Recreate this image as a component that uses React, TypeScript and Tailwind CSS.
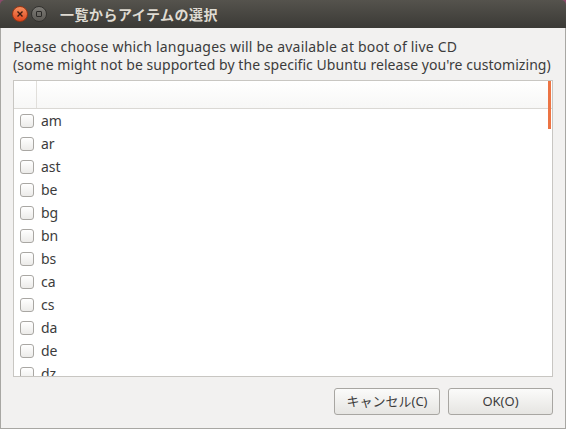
import React from 'react';

const langs = ['am', 'ar', 'ast', 'be', 'bg', 'bn', 'bs', 'ca', 'cs', 'da', 'de', 'dz'];

const font = { fontFamily: '"Noto Sans", "Noto Sans CJK JP", sans-serif' };

export default function App() {
  return (
    <div className="w-[566px] h-[429px] bg-[#8a4a6a] text-[#3c3c3c]" style={font}>
      <div className="flex flex-col h-full rounded-t-[5px] overflow-hidden">
        {/* title bar */}
        <div className="h-[28px] shrink-0 flex items-center bg-gradient-to-b from-[#55534d] to-[#3b3a36] px-[12px]">
          <div className="w-[16px] h-[16px] rounded-full bg-gradient-to-b from-[#f58e5d] to-[#e0461c] border border-[#9c3514] flex items-center justify-center">
            <svg width="8" height="8" viewBox="0 0 8 8">
              <path d="M1.5 1.5 L6.5 6.5 M6.5 1.5 L1.5 6.5" stroke="#3a1a10" strokeWidth="1.4" />
            </svg>
          </div>
          <div className="ml-[3px] w-[16px] h-[16px] rounded-full bg-gradient-to-b from-[#7d7b76] to-[#5c5a55] border border-[#33322f] flex items-center justify-center">
            <div className="w-[6px] h-[6px] border border-[#2a2927] rounded-[1px]" />
          </div>
          <div className="ml-[13px] text-[14px] font-bold text-[#dfdbd2] tracking-[0.5px]">一覧からアイテムの選択</div>
        </div>

        {/* body */}
        <div className="flex-1 flex flex-col bg-[#f2f1f0] border-x border-b border-[#a8a7a3] px-[12px] pt-[10px] pb-[13px]">
          <div className="text-[14px] leading-[18px]">
            <div className="tracking-[0.2px]">Please choose which languages will be available at boot of live CD</div>
            <div className="whitespace-nowrap tracking-[0.05px]">(some might not be supported by the specific Ubuntu release you're customizing)</div>
          </div>

          <div className="mt-[6px] h-[297px] border border-[#c8c6c2] bg-white relative overflow-hidden">
            <div className="h-[28px] flex border-b border-[#dad8d4] bg-gradient-to-b from-white to-[#f7f7f6]">
              <div className="w-[23px] border-r border-[#e1dfdb]" />
            </div>
            {langs.map((l) => (
              <div key={l} className="h-[23px] flex items-center">
                <div className="ml-[6px] w-[14px] h-[14px] rounded-[3px] border border-[#a9a7a3] bg-gradient-to-b from-white to-[#ecebe9]" />
                <span className="ml-[7px] text-[14px]">{l}</span>
              </div>
            ))}
            <div className="absolute right-[1px] top-0 w-[3px] h-[48px] bg-[#ec7444]" />
          </div>

          <div className="flex-1" />
          <div className="flex justify-end gap-[8px]">
            <button className="w-[106px] h-[27px] rounded-[3px] border border-[#a8a6a2] bg-gradient-to-b from-[#fbfbfa] to-[#e6e5e2] text-[13px] text-[#3c3c3c]">
              キャンセル(C)
            </button>
            <button className="w-[105px] h-[27px] rounded-[3px] border border-[#a8a6a2] bg-gradient-to-b from-[#fbfbfa] to-[#e6e5e2] text-[13px] text-[#3c3c3c]">
              OK(O)
            </button>
          </div>
        </div>
      </div>
    </div>
  );
}
